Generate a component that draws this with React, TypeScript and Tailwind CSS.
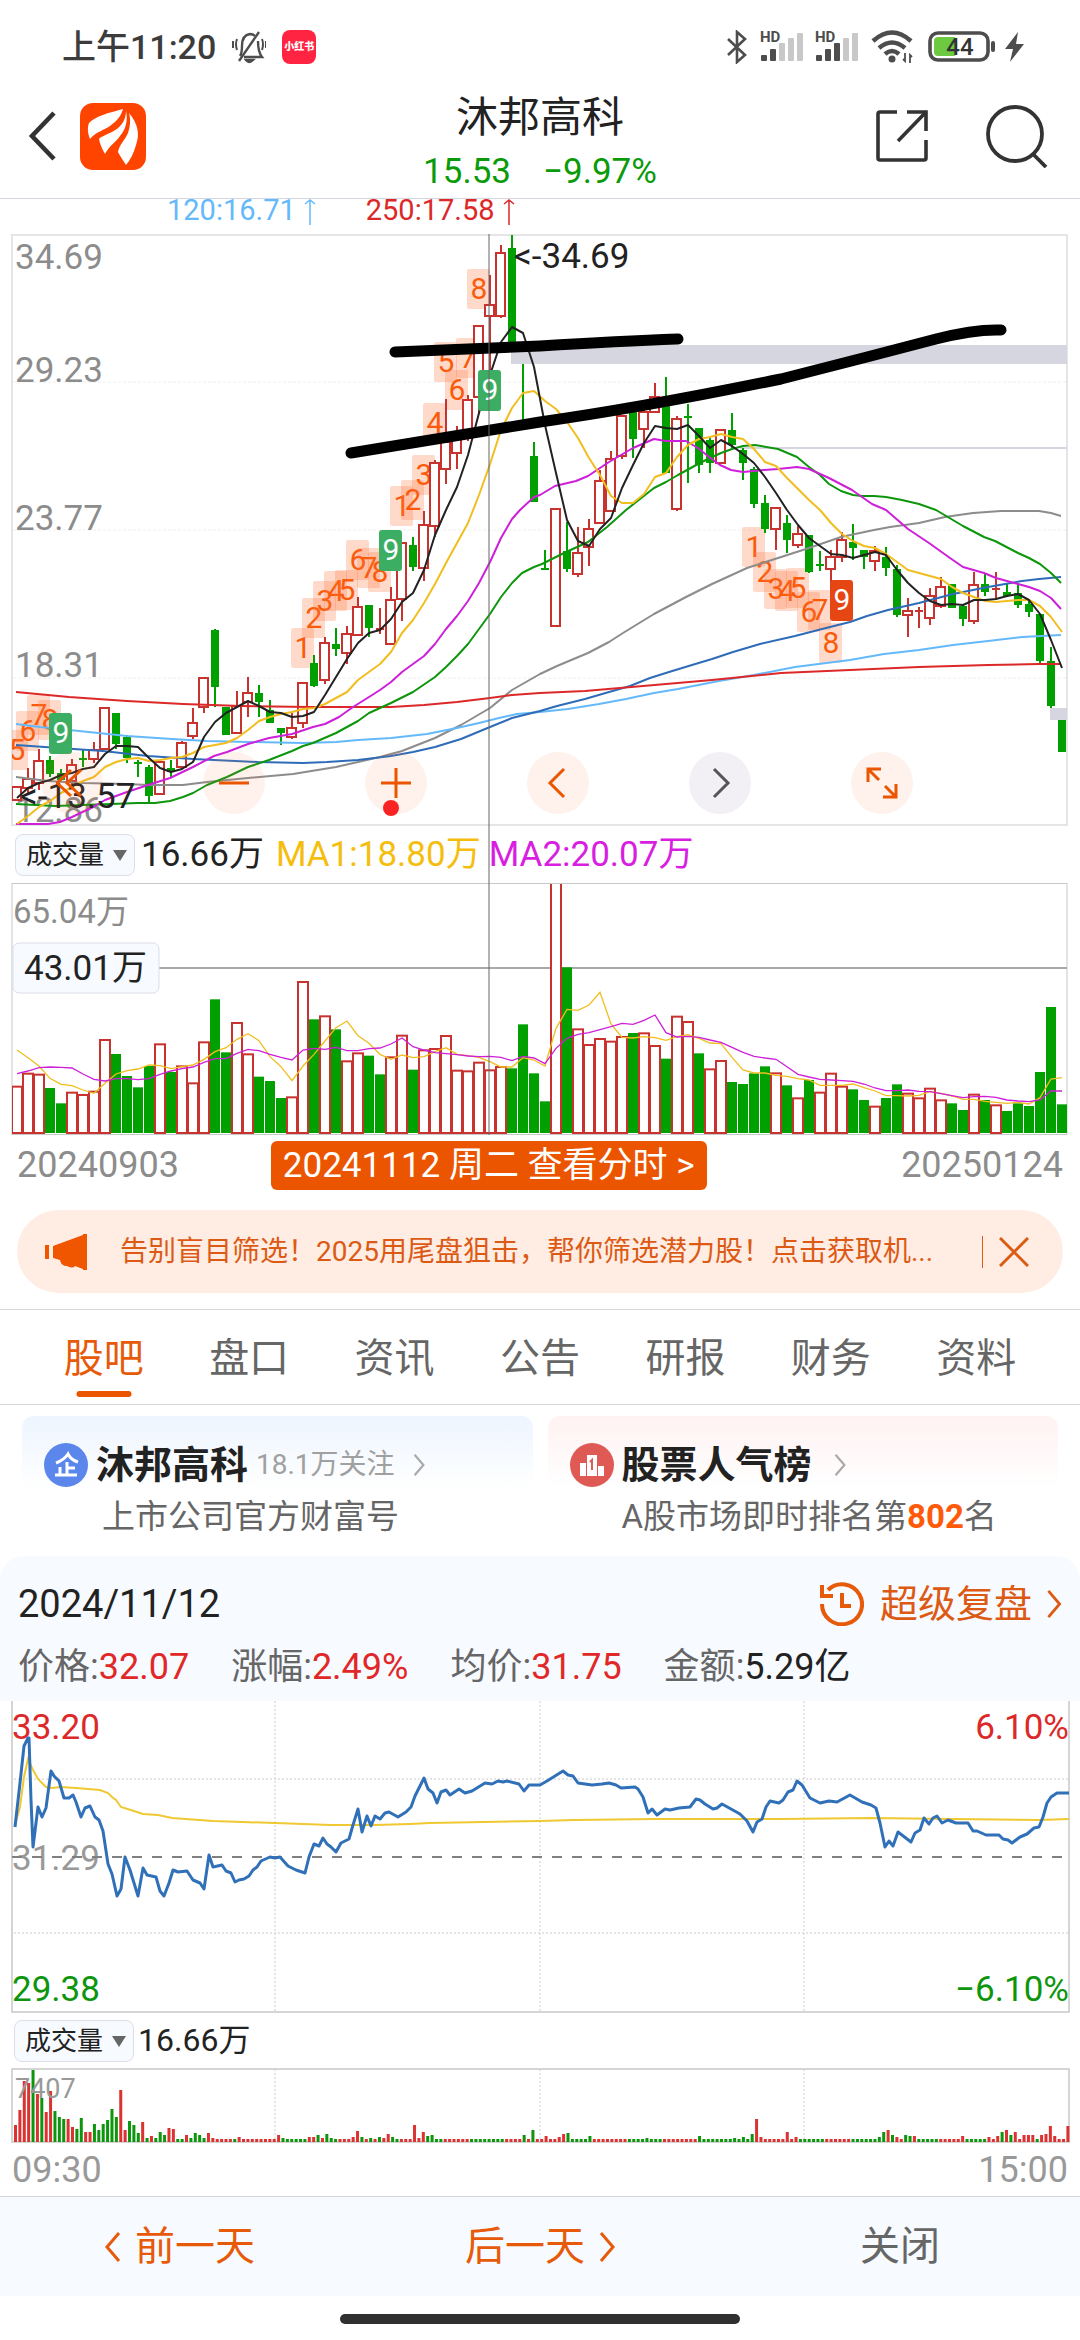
import { useState } from "react"
import type { ReactNode } from "react"

type Candle = [number, number, number, number, number] // high, body top, body bottom, low, 1 = up
type Point = [number, number]

const RED = "#c8322f"
const GREEN = "#00a000"
const STEP = 11
const FIRST_X = 17

const barX = (i: number) => FIRST_X + i * STEP

const candles: Candle[] = [
  [553, 553, 566, 566, 1], [534, 545, 554, 559, 1], [515, 527, 549, 556, 1], [522, 526, 540, 543, 0],
  [535, 539, 546, 548, 0], [525, 531, 547, 551, 1], [516, 524, 526, 533, 0], [508, 516, 525, 529, 1],
  [474, 474, 515, 515, 1], [479, 479, 510, 515, 0], [501, 503, 524, 529, 0], [526, 528, 529, 543, 0],
  [531, 533, 562, 568, 0], [528, 528, 560, 560, 1], [526, 534, 538, 543, 0], [507, 509, 533, 535, 1],
  [474, 489, 502, 505, 1], [444, 444, 473, 479, 1], [395, 396, 453, 473, 0], [473, 473, 501, 501, 0],
  [457, 472, 499, 500, 1], [443, 459, 468, 483, 1], [451, 459, 468, 483, 0], [466, 476, 489, 489, 0],
  [494, 494, 499, 511, 0], [479, 494, 503, 505, 1], [449, 449, 489, 494, 1], [421, 429, 452, 453, 0],
  [403, 409, 446, 450, 1], [394, 410, 415, 422, 0], [392, 400, 419, 430, 1], [363, 373, 401, 402, 1],
  [371, 371, 394, 403, 0], [374, 394, 395, 400, 1], [353, 366, 410, 411, 1], [309, 309, 365, 387, 1],
  [303, 311, 333, 337, 0], [277, 291, 334, 347, 1], [226, 229, 292, 303, 1], [165, 208, 235, 250, 1],
  [192, 204, 219, 235, 1], [161, 166, 203, 207, 1], [92, 92, 163, 180, 1], [41, 71, 82, 156, 1],
  [11, 19, 82, 84, 1], [1, 14, 108, 108, 0], [130, 186, 187, 187, 0], [208, 222, 268, 268, 0],
  [316, 334, 336, 336, 0], [275, 275, 392, 392, 1], [288, 317, 335, 338, 0], [293, 319, 340, 343, 1],
  [285, 295, 313, 332, 1], [236, 247, 289, 289, 1], [217, 225, 277, 278, 1], [182, 182, 222, 225, 1],
  [178, 178, 205, 224, 0], [176, 178, 195, 214, 1], [149, 163, 178, 178, 1], [143, 164, 239, 239, 0],
  [182, 185, 275, 277, 1], [170, 182, 184, 249, 0], [194, 194, 231, 239, 0], [204, 206, 229, 239, 0],
  [196, 196, 229, 229, 1], [179, 196, 211, 214, 0], [214, 216, 229, 246, 0], [233, 235, 270, 274, 0],
  [261, 269, 295, 299, 0], [274, 274, 295, 316, 1], [281, 289, 306, 319, 0], [292, 300, 311, 314, 1],
  [301, 301, 338, 339, 0], [317, 330, 331, 337, 0], [316, 323, 335, 353, 1], [298, 306, 323, 328, 1],
  [290, 308, 314, 326, 0], [316, 316, 323, 335, 0], [312, 317, 327, 337, 1], [313, 323, 334, 342, 0],
  [331, 335, 381, 383, 0], [364, 377, 381, 403, 1], [373, 376, 377, 394, 1], [354, 362, 384, 391, 1],
  [343, 353, 372, 374, 1], [350, 350, 374, 374, 0], [370, 372, 385, 392, 0], [338, 351, 387, 390, 1],
  [339, 350, 358, 362, 0], [338, 354, 356, 365, 1], [349, 358, 362, 363, 0], [349, 359, 371, 374, 0],
  [365, 370, 378, 383, 0], [380, 380, 427, 429, 0], [413, 427, 472, 474, 0], [486, 486, 518, 518, 0],
]

const ma5 = [
  564, 554, 549, 546, 541, 539, 535, 533, 520, 512, 512, 513, 524, 534, 538, 535, 528, 503, 488, 479, 473, 467, 472, 478,
  479, 483, 482, 478, 461, 443, 425, 409, 399, 396, 385, 368, 359, 336, 301, 276, 253, 221, 179, 141, 108, 93, 99, 133,
  191, 239, 286, 307, 312, 295, 284, 254, 231, 209, 192, 194, 195, 191, 202, 214, 206, 212, 220, 229, 243, 259, 276, 291,
  304, 312, 320, 321, 324, 321, 318, 321, 336, 349, 359, 367, 371, 370, 371, 366, 366, 365, 362, 360, 366, 380, 406, 434,
]

const ma10 = [
  590, 582, 573, 567, 559, 553, 547, 543, 533, 528, 525, 524, 527, 526, 524, 523, 519, 513, 511, 509, 504, 496, 487, 483,
  480, 478, 475, 474, 470, 464, 458, 446, 438, 430, 418, 399, 386, 369, 350, 329, 309, 289, 261, 230, 196, 174, 159, 157,
  167, 175, 188, 204, 224, 241, 262, 269, 269, 260, 243, 239, 223, 211, 205, 203, 200, 203, 205, 215, 228, 232, 244, 255,
  266, 276, 289, 300, 307, 312, 314, 320, 328, 336, 339, 342, 345, 353, 359, 363, 367, 368, 367, 366, 366, 372, 383, 398,
]

const ma20: Point[] = [
  [16, 590], [48, 590], [60, 588], [72, 583], [93, 573], [105, 566], [127, 558], [148, 551], [170, 544], [193, 533],
  [214, 522], [227, 518], [248, 510], [269, 504], [292, 500], [313, 493], [325, 490], [339, 483], [353, 473], [369, 463],
  [380, 456], [391, 448], [402, 438], [424, 422], [435, 410], [446, 395], [457, 382], [468, 367], [479, 349], [490, 328],
  [501, 304], [512, 285], [520, 276], [534, 263], [540, 261], [555, 252], [576, 247], [588, 242], [609, 228], [633, 214],
  [654, 205], [666, 207], [686, 207], [698, 214], [709, 223], [720, 231], [731, 236], [743, 238], [764, 236], [778, 235],
  [797, 233], [809, 235], [829, 244], [852, 256], [872, 270], [886, 276], [908, 295], [929, 309], [950, 324], [963, 333],
  [984, 339], [996, 344], [1018, 350], [1029, 353], [1040, 357], [1051, 364], [1061, 375],
]

const ma30: Point[] = [
  [16, 570], [55, 572], [83, 571], [138, 569], [155, 569], [170, 567], [183, 563], [193, 559], [207, 551], [227, 543],
  [248, 533], [269, 526], [292, 517], [303, 512], [313, 509], [336, 499], [358, 487], [369, 479], [391, 469], [413, 458],
  [435, 443], [446, 433], [457, 422], [468, 410], [479, 395], [490, 380], [501, 363], [512, 349], [522, 339], [534, 333],
  [542, 330], [564, 319], [588, 308], [607, 293], [626, 276], [654, 254], [666, 248], [678, 241], [698, 230], [710, 224],
  [721, 219], [732, 215], [743, 212], [755, 211], [778, 215], [797, 223], [809, 233], [820, 241], [829, 250], [841, 257],
  [853, 261], [862, 262], [874, 262], [886, 263], [902, 266], [919, 270], [936, 276], [963, 292], [984, 303], [995, 307],
  [1018, 319], [1029, 324], [1040, 330], [1051, 339], [1061, 349],
]

const ma60: Point[] = [
  [16, 543], [48, 547], [83, 549], [127, 550], [148, 551], [183, 551], [207, 548], [248, 544], [293, 540], [336, 533],
  [380, 523], [402, 517], [435, 504], [461, 491], [490, 474], [512, 456], [540, 440], [557, 432], [588, 419], [609, 408],
  [623, 399], [654, 380], [686, 363], [712, 350], [747, 334], [778, 324], [809, 314], [841, 303], [874, 296], [890, 293],
  [919, 289], [945, 283], [973, 279], [1001, 277], [1039, 277], [1051, 279], [1061, 282],
]

const ma120: Point[] = [
  [16, 490], [40, 493], [79, 497], [127, 502], [172, 505], [207, 507], [248, 508], [303, 509], [336, 508], [358, 506],
  [391, 504], [427, 500], [457, 494], [479, 489], [499, 484], [517, 480], [540, 478], [568, 475], [599, 470], [626, 465],
  [654, 459], [678, 455], [719, 447], [754, 441], [795, 433], [850, 426], [884, 420], [919, 416], [953, 411], [988, 407],
  [1022, 403], [1061, 401],
]

const ma144: Point[] = [
  [16, 511], [59, 514], [103, 517], [148, 522], [193, 525], [258, 528], [303, 529], [327, 528], [358, 526], [391, 522],
  [413, 518], [435, 513], [461, 505], [490, 493], [512, 484], [540, 477], [557, 472], [585, 465], [609, 458], [630, 452],
  [650, 444], [669, 438], [692, 431], [712, 425], [733, 418], [760, 410], [795, 402], [826, 394], [850, 388], [867, 382],
  [888, 376], [919, 369], [953, 360], [988, 353], [1022, 347], [1039, 345], [1061, 343],
]

const ma250: Point[] = [
  [16, 458], [69, 463], [127, 467], [183, 470], [241, 472], [310, 473], [391, 473], [424, 471], [457, 468], [490, 464],
  [512, 461], [540, 459], [585, 457], [643, 452], [712, 446], [781, 439], [850, 436], [919, 433], [988, 431], [1039, 430],
  [1061, 430],
]

// bar index, centre y, count
const counts: [number, number, number][] = [
  [0, 516, 5], [1, 497, 6], [2, 481, 7], [3, 486, 8],
  [26, 414, 1], [27, 384, 2], [28, 367, 3], [29, 357, 4], [30, 356, 5], [31, 326, 6], [32, 334, 7], [33, 338, 8],
  [35, 272, 1], [36, 266, 2], [37, 241, 3], [38, 189, 4], [39, 128, 5], [40, 156, 6], [41, 124, 7], [42, 55, 8],
  [67, 313, 1], [68, 338, 2], [69, 355, 3], [70, 357, 4], [71, 354, 5], [72, 378, 6], [73, 376, 7], [74, 409, 8],
]

const nines = [
  { i: 4, y: 499, fill: "#3cae64" },
  { i: 34, y: 316, fill: "#3cae64" },
  { i: 43, y: 156, fill: "#3cae64" },
  { i: 75, y: 366, fill: "#e64614" },
]

const priceLabels: [string, number][] = [
  ["34.69", 35], ["29.23", 148], ["23.77", 296], ["18.31", 443], ["12.86", 588],
]

// bar tops, three units to one chart unit
const volumes = [
  797, 758, 761, 804, 850, 815, 822, 812, 657, 702, 768, 802, 738, 670, 756, 736, 787, 664, 538, 697, 606, 700, 770, 783,
  834, 829, 483, 598, 586, 628, 721, 697, 707, 763, 709, 644, 749, 688, 684, 645, 749, 751, 725, 748, 738, 745, 613, 760,
  844, 180, 442, 625, 672, 654, 662, 648, 639, 637, 675, 716, 587, 603, 700, 745, 720, 786, 792, 760, 739, 757, 796, 832,
  780, 815, 758, 797, 808, 840, 857, 834, 793, 818, 832, 803, 838, 850, 870, 821, 840, 853, 873, 850, 858, 756, 561, 853,
]
const volumeColors =
  "rrrggrrrrggggrgrrrggrrgggrrgrgrrggrrgrrrrrrrrggggrgrrrrrgrrgrrgrrggggrgrgrrrggrggrrrrggrgrgggggg"

const volumeMa5 = [
  690, 713, 738, 775, 793, 797, 810, 820, 790, 762, 752, 747, 735, 737, 746, 740, 735, 718, 695, 683, 658, 641, 662, 710,
  740, 782, 738, 703, 663, 623, 603, 647, 670, 703, 718, 705, 713, 710, 695, 683, 703, 707, 712, 725, 741, 741, 713, 720,
  738, 625, 568, 571, 555, 517, 612, 652, 654, 650, 653, 661, 650, 644, 655, 669, 671, 712, 750, 759, 759, 766, 769, 776,
  780, 796, 796, 796, 792, 803, 813, 827, 827, 828, 826, 815, 820, 828, 838, 838, 844, 847, 850, 847, 852, 833, 777, 773,
]
const volumeMa10 = [
  761, 753, 743, 741, 742, 744, 762, 778, 783, 776, 776, 779, 776, 763, 753, 746, 741, 727, 716, 716, 700, 688, 692, 703,
  712, 720, 690, 685, 688, 682, 692, 692, 686, 684, 672, 654, 680, 690, 698, 701, 704, 708, 710, 709, 712, 722, 709, 714,
  731, 685, 655, 643, 638, 629, 620, 610, 613, 601, 585, 638, 651, 649, 652, 660, 667, 682, 697, 709, 714, 718, 740, 763,
  771, 778, 780, 782, 784, 792, 804, 812, 812, 810, 814, 815, 821, 827, 833, 830, 829, 832, 840, 843, 845, 840, 813, 813,
]

const dayPrice: Point[] = [
  [15, 126], [20, 82], [24, 45], [28, 37], [29, 37], [31, 99], [33, 146], [38, 106], [42, 116], [46, 107], [51, 70],
  [54, 75], [59, 80], [64, 97], [69, 97], [73, 94], [76, 101], [81, 116], [85, 107], [90, 105], [95, 116], [99, 119],
  [103, 130], [108, 163], [112, 173], [117, 195], [121, 188], [125, 156], [130, 169], [138, 195], [143, 167], [147, 174],
  [156, 176], [160, 190], [164, 195], [169, 182], [173, 169], [178, 171], [187, 170], [193, 179], [200, 182], [204, 188],
  [209, 154], [213, 166], [222, 164], [226, 170], [231, 172], [235, 181], [239, 179], [244, 178], [249, 175], [253, 169],
  [257, 166], [261, 160], [270, 156], [275, 157], [280, 156], [288, 165], [296, 169], [305, 172], [309, 156], [314, 143],
  [319, 145], [323, 137], [327, 143], [331, 146], [336, 151], [341, 142], [349, 138], [353, 124], [358, 108], [362, 131],
  [367, 115], [371, 125], [375, 115], [380, 118], [385, 112], [389, 111], [398, 116], [406, 111], [411, 106], [415, 95],
  [419, 87], [424, 77], [428, 88], [433, 92], [437, 102], [441, 91], [446, 89], [450, 94], [459, 88], [465, 92],
  [472, 90], [485, 82], [492, 83], [498, 80], [503, 81], [507, 80], [519, 83], [524, 90], [529, 84], [540, 84],
  [547, 80], [555, 75], [563, 70], [568, 74], [573, 75], [578, 82], [592, 84], [602, 83], [609, 82], [616, 84],
  [621, 87], [635, 86], [638, 88], [643, 96], [648, 112], [652, 108], [657, 114], [665, 108], [670, 109], [679, 107],
  [690, 106], [696, 98], [700, 99], [705, 103], [713, 108], [717, 107], [722, 103], [731, 108], [740, 113], [747, 120],
  [753, 131], [757, 121], [762, 118], [766, 106], [770, 100], [779, 102], [783, 99], [788, 91], [793, 89], [797, 80],
  [802, 84], [810, 97], [820, 102], [829, 100], [837, 101], [850, 94], [862, 101], [871, 104], [876, 107], [880, 122],
  [885, 146], [889, 140], [893, 145], [898, 131], [911, 141], [915, 132], [920, 129], [924, 117], [929, 123], [933, 117],
  [937, 115], [942, 122], [948, 119], [956, 122], [968, 122], [973, 130], [977, 130], [986, 134], [999, 134], [1003, 138],
  [1008, 139], [1012, 142], [1020, 136], [1027, 133], [1034, 127], [1039, 126], [1043, 116], [1047, 102], [1051, 96],
  [1057, 92], [1069, 92],
]

const dayAverage: Point[] = [
  [15, 124], [20, 106], [24, 76], [28, 58], [33, 69], [38, 78], [46, 86], [52, 87], [60, 86], [76, 87], [100, 89],
  [108, 92], [112, 96], [116, 99], [121, 106], [134, 110], [143, 113], [158, 114], [172, 117], [213, 120], [275, 122],
  [331, 124], [375, 124], [410, 123], [430, 122], [540, 120], [574, 119], [654, 118], [781, 118], [871, 117], [953, 118],
  [1039, 119], [1069, 118],
]

// minutes that stand out from the quiet level: height, colour
const dayVolumes: Record<number, [number, string]> = {
  0: [17, "r"], 1: [32, "r"], 2: [61, "r"], 3: [59, "r"], 4: [72, "g"], 5: [48, "r"], 6: [44, "g"], 7: [30, "r"],
  8: [51, "r"], 9: [31, "g"], 10: [25, "g"], 11: [23, "g"], 12: [23, "r"], 13: [15, "r"], 14: [13, "g"], 15: [24, "g"],
  16: [10, "r"], 17: [10, "r"], 18: [18, "g"], 19: [12, "g"], 20: [18, "g"], 21: [22, "g"], 22: [33, "g"], 23: [25, "g"],
  24: [52, "r"], 25: [12, "r"], 26: [21, "g"], 27: [17, "g"], 28: [9, "g"], 29: [20, "r"], 30: [4, "g"], 31: [6, "r"],
  32: [4, "g"], 33: [10, "g"], 34: [7, "g"], 35: [14, "r"], 36: [13, "r"], 39: [7, "r"], 40: [4, "g"], 41: [9, "g"],
  42: [7, "g"], 43: [4, "g"], 44: [9, "r"], 45: [4, "r"], 51: [5, "r"], 60: [7, "r"], 61: [4, "g"], 67: [5, "r"],
  68: [5, "r"], 69: [7, "g"], 70: [4, "r"], 71: [8, "g"], 72: [4, "g"], 77: [5, "r"], 78: [11, "r"], 79: [5, "g"],
  81: [4, "g"], 83: [5, "g"], 84: [4, "r"], 85: [8, "r"], 86: [5, "g"], 91: [17, "r"], 92: [4, "r"], 93: [10, "r"],
  94: [6, "g"], 95: [7, "g"], 116: [7, "g"], 118: [12, "g"], 121: [6, "r"], 124: [5, "r"], 125: [8, "r"], 126: [9, "g"],
  131: [6, "g"], 144: [4, "g"], 156: [6, "g"], 164: [4, "g"], 166: [5, "g"], 168: [8, "g"], 169: [23, "r"], 170: [5, "r"],
  176: [10, "r"], 178: [5, "r"], 197: [5, "g"], 198: [10, "g"], 199: [12, "r"], 200: [7, "g"], 201: [5, "r"],
  203: [7, "g"], 204: [6, "g"], 205: [6, "r"], 216: [6, "r"], 222: [5, "r"], 224: [6, "r"], 225: [10, "g"],
  226: [12, "r"], 227: [7, "g"], 228: [10, "r"], 230: [7, "r"], 231: [7, "r"], 232: [7, "r"], 234: [7, "r"],
  235: [8, "r"], 236: [16, "r"], 237: [6, "r"], 240: [16, "r"],
}
const quietGreen = [[37, 38], [50, 50], [62, 66], [73, 73], [87, 87], [96, 97], [104, 111], [127, 130], [140, 147], [157, 168], [179, 184], [191, 197], [206, 210], [217, 221], [233, 233]]

const tabs = ["股吧", "盘口", "资讯", "公告", "研报", "财务", "资料"]

const toPoints = (list: Point[]) => list.map((p) => p.join(",")).join(" ")
const barPoints = (list: number[]) => list.map((y, i) => `${barX(i)},${y}`).join(" ")
const volumeY = (v: number) => v / 3 - 63
const volumePoints = (list: number[]) => list.map((v, i) => `${barX(i)},${volumeY(v)}`).join(" ")

function Chevron({ left, className }: { left?: boolean; className: string }) {
  return (
    <svg viewBox="0 0 16 30" fill="none" stroke="currentColor" strokeWidth="3" className={className}>
      <path d={left ? "M14 1 L2 15 L14 29" : "M2 1 L14 15 L2 29"} />
    </svg>
  )
}

function Signal({ strong }: { strong: number }) {
  return (
    <svg viewBox="0 0 43 34" className="h-[34px] w-[43px] overflow-visible">
      <text x="0" y="12" fontSize="15" fontWeight="700" fill="#4d4d4d">HD</text>
      {[6, 12, 18, 23, 28].map((h, i) => (
        <rect key={i} x={1 + i * 9} y={31 - h} width="6" height={h} rx="1" fill={i < strong ? "#4d4d4d" : "#c8c8c8"} />
      ))}
    </svg>
  )
}

function StatusBar() {
  return (
    <div className="flex h-[94px] items-center justify-between pl-[62px] pr-[54px] text-[#3c3c3c]">
      <div className="flex items-center gap-4">
        <span className="text-[34px] leading-[40px] font-medium">上午11:20</span>
        <svg viewBox="0 0 34 34" fill="none" stroke="#4d4d4d" strokeWidth="2.4" className="h-[34px] w-[34px]">
          <path d="M8 26 Q10 23 10 16 Q10 5 18 4 Q21 4 23 6" />
          <path d="M26 11 Q26 22 30 27 H12" />
          <path d="M27 2 L7 31" />
          <path d="M5 9 Q3 14 5 20 M1 11 V18 M30 9 Q32 14 30 20 M34 11 V18" strokeWidth="2" />
          <path d="M14 30 Q17 34 21 30 Z" fill="#4d4d4d" />
        </svg>
        <span className="flex h-[34px] w-[34px] items-center justify-center rounded-lg bg-[#ff2442] text-[10px] leading-none font-black text-white">
          小红书
        </span>
      </div>
      <div className="flex items-center gap-3">
        <svg viewBox="0 0 22 34" fill="none" stroke="#4d4d4d" strokeWidth="2.6" className="h-[34px] w-[22px]">
          <path d="M2 9 L19 25 L11 32 V2 L19 9 L2 25" />
        </svg>
        <Signal strong={2} />
        <Signal strong={3} />
        <svg viewBox="0 0 46 34" fill="none" stroke="#4d4d4d" strokeWidth="4.5" className="h-[34px] w-[46px]">
          <path d="M3 11 Q22 -6 41 11" />
          <path d="M9 18 Q22 7 35 18" />
          <path d="M15 24 Q22 18 29 24" />
          <circle cx="22" cy="29" r="3.5" fill="#4d4d4d" stroke="none" />
          <path d="M35 23 V31 L33 29 M40 33 V25 L42 27" strokeWidth="1.8" />
        </svg>
        <svg viewBox="0 0 98 34" className="h-[34px] w-[98px]">
          <rect x="2" y="3" width="58" height="27" rx="8" fill="none" stroke="#4d4d4d" strokeWidth="3.6" />
          <rect x="6" y="7" width="23" height="19" rx="4" fill="#6cc940" />
          <rect x="63" y="11" width="4" height="11" rx="2" fill="#4d4d4d" />
          <text x="32" y="25" fontSize="24" fontWeight="500" textAnchor="middle" fill="#333">44</text>
          <path d="M90 2 L77 19 H85 L82 32 L96 14 H88 Z" fill="#4d4d4d" />
        </svg>
      </div>
    </div>
  )
}

function Header() {
  return (
    <header className="grid grid-cols-[1fr_auto_1fr] items-center border-b border-[#d5d6df] pb-1">
      <div className="flex items-center gap-6 pb-4 pl-7">
        <button type="button" aria-label="返回">
          <svg viewBox="0 0 28 50" fill="none" stroke="#333" strokeWidth="4.6" className="h-[50px] w-7">
            <path d="M26 2 L4 25 L26 48" />
          </svg>
        </button>
        <svg viewBox="0 0 66 67" className="h-[67px] w-[66px]">
          <rect width="66" height="67" rx="13" fill="#ff4400" />
          <g fill="#fff">
            <path d="M43 6 C28 10 16 13 9 20 C7 25 8 31 10 36 C16 29 24 27 30 23 C37 18 41 13 43 6 Z" />
            <path d="M46 8 C46 18 40 25 32 29 C26 32 20 34 19 36 C20 41 22 46 25 51 C29 43 36 39 40 33 C46 26 48 17 46 8 Z" />
            <path d="M49 10 C58 21 60 31 56 42 C54 50 50 57 46 62 C43 57 40 53 38 49 C39 42 45 37 48 30 C50 24 51 17 49 10 Z" />
          </g>
        </svg>
      </div>
      <div className="text-center">
        <h1 className="text-[42px] leading-[48px] text-[#222]">沐邦高科</h1>
        <p className="mt-2 flex justify-center gap-8 text-[35px] leading-[44px] text-[#0a9a0a]">
          <span>15.53</span>
          <span>−9.97%</span>
        </p>
      </div>
      <div className="flex items-center justify-end gap-[56px] pr-[31px] pb-4">
        <button type="button" aria-label="分享">
          <svg viewBox="0 0 54 54" fill="none" stroke="#333" strokeWidth="3.6" className="h-[54px] w-[54px]">
            <path d="M22 3 H5 Q3 3 3 5 V49 Q3 51 5 51 H49 Q51 51 51 49 V31" />
            <path d="M32 3 H51 V22" />
            <path d="M51 3 L23 32" />
          </svg>
        </button>
        <button type="button" aria-label="搜索">
          <svg viewBox="0 0 64 64" fill="none" stroke="#333" strokeWidth="3.8" className="h-16 w-16">
            <circle cx="30" cy="30" r="27" />
            <path d="M48 50 L61 63" />
          </svg>
        </button>
      </div>
    </header>
  )
}

function UpArrow() {
  return (
    <svg viewBox="0 0 12 26" fill="none" stroke="currentColor" strokeWidth="1.5" className="h-[26px] w-3">
      <path d="M6 26 V1 M1 5 L6 1 L11 5" />
    </svg>
  )
}

function MaLegend() {
  return (
    <div className="flex h-[35px] gap-[50px] pl-[167px] text-[29px] leading-[23px]">
      <span className="flex gap-2 text-[#64b9fa]">120:16.71 <UpArrow /></span>
      <span className="flex gap-2 text-[#dc2828]">250:17.58 <UpArrow /></span>
    </div>
  )
}

function CandleChart() {
  return (
    <svg viewBox="0 0 1080 592" className="block w-full overflow-visible">
      <rect x="12" y="1" width="1055" height="590" fill="none" stroke="#e5e5e5" strokeWidth="2" />
      {[148, 296, 444].map((y) => (
        <line key={y} x1="13" x2="1067" y1={y} y2={y} stroke="#f0eef0" strokeDasharray="3 2" />
      ))}
      <rect x="511" y="111" width="556" height="19" fill="#d5d6df" />
      <line x1="740" x2="1067" y1="214" y2="214" stroke="#d5d6df" strokeWidth="2" />
      <rect x="1050" y="474" width="17" height="12" fill="#d5d6df" />

      <g fontSize="35" fill="#8c8c8c">
        {priceLabels.map(([label, y]) => (
          <text key={label} x="15" y={y}>{label}</text>
        ))}
      </g>

      {/* 九转计数 */}
      <svg x="12" y="0" width="1055" height="592" viewBox="12 0 1055 592">
        {counts.map(([i, y, n]) => (
          <g key={i}>
            <rect x={barX(i) - 12} y={y - 20} width="23" height="40" rx="2" fill="#ff7840" fillOpacity="0.27" />
            <text x={barX(i)} y={y + 10} fontSize="30" textAnchor="middle" fill="#fa5a0a">{n}</text>
          </g>
        ))}
        {candles.map(([high, top, bottom, low, up], i) => {
          const x = barX(i)
          const color = up ? RED : GREEN
          const height = Math.max(bottom - top, 2)
          return (
            <g key={i} stroke={color} strokeWidth="2">
              <line x1={x} x2={x} y1={high} y2={top} />
              <line x1={x} x2={x} y1={bottom} y2={low} />
              {up && height > 3 ? (
                <rect x={x - 5} y={top} width="9" height={height} fill="#fff" />
              ) : (
                <rect x={x - 4} y={top} width="8" height={height} fill={color} stroke="none" />
              )}
            </g>
          )
        })}
      </svg>

      <g fill="none" strokeWidth="2" strokeLinejoin="round">
        <polyline points={toPoints(ma60)} stroke="#8c8c8c" />
        <polyline points={toPoints(ma120)} stroke="#64b9fa" />
        <polyline points={toPoints(ma144)} stroke="#2f6cb8" />
        <polyline points={toPoints(ma250)} stroke="#dc2828" />
        <polyline points={toPoints(ma30)} stroke="#0d960d" />
        <polyline points={toPoints(ma20)} stroke="#cd20d8" />
        <polyline points={barPoints(ma10)} stroke="#f0be1e" />
        <polyline points={barPoints(ma5)} stroke="#222" />
      </g>

      {nines.map(({ i, y, fill }) => (
        <g key={i}>
          <rect x={barX(i) - 12} y={y - 20} width="23" height="41" rx="3" fill={fill} />
          <text x={barX(i)} y={y + 10} fontSize="30" textAnchor="middle" fill="#fff">9</text>
        </g>
      ))}

      <g fontSize="35" fill="#222">
        <text x="514" y="34">&lt;-34.69</text>
        <text x="20" y="574">&lt;-13.57</text>
      </g>

      <g fill="none" stroke="#000" strokeWidth="11" strokeLinecap="round" strokeLinejoin="round">
        <path d="M395 118 L540 112 Q620 107 678 105" />
        <path d="M351 219 L540 188 Q640 174 781 145 L867 123 L936 105 Q975 95 1001 96" />
      </g>
    </svg>
  )
}

function ToolButton({ label, muted, children }: { label: string; muted?: boolean; children: ReactNode }) {
  return (
    <button
      type="button"
      aria-label={label}
      className={`flex h-[62px] w-[62px] items-center justify-center rounded-full ${
        muted ? "bg-[#8c6ea0]/10 text-[#555]" : "bg-[#ff7846]/10 text-[#eb5500]"
      }`}
    >
      <svg viewBox="0 0 32 32" fill="none" stroke="currentColor" strokeWidth="3" className="h-8 w-8">
        {children}
      </svg>
    </button>
  )
}

function ChartTools() {
  return (
    <div className="absolute bottom-3 left-0 flex gap-[100px] pl-[41px]">
      <ToolButton label="向前翻页"><path d="M15 3 L1 16 L15 29 M25 3 L11 16 L25 29" /></ToolButton>
      <ToolButton label="缩小"><path d="M1 16 H31" /></ToolButton>
      <ToolButton label="放大"><path d="M1 16 H31 M16 1 V31" /></ToolButton>
      <ToolButton label="左移"><path d="M22 2 L8 16 L22 30" /></ToolButton>
      <ToolButton label="右移" muted><path d="M10 2 L24 16 L10 30" /></ToolButton>
      <ToolButton label="全屏"><path d="M15 2 H2 V15 M2 2 L13 13 M17 30 H30 V17 M30 30 L19 19" /></ToolButton>
    </div>
  )
}

function IndicatorSelect({ id }: { id: string }) {
  return (
    <div className="relative">
      <label htmlFor={id} className="sr-only">指标</label>
      <select
        id={id}
        className="block h-[42px] w-[120px] appearance-none rounded-lg border border-[#dcdee8] bg-[#f7faff] pl-[10px] text-[26px] leading-[38px] text-[#222]"
      >
        <option>成交量</option>
      </select>
      <svg viewBox="0 0 14 11" className="pointer-events-none absolute top-4 right-2 h-[11px] w-[14px] fill-[#666]">
        <path d="M0 0 H14 L7 11 Z" />
      </svg>
    </div>
  )
}

function VolumeChart() {
  return (
    <svg viewBox="0 0 1080 252" className="block w-full">
      <rect x="12" y="0.5" width="1055" height="251" fill="none" stroke="#c8c8c8" />
      <text x="13" y="40" fontSize="33" fill="#8c8c8c">65.04万</text>
      <line x1="159" x2="1067" y1="85" y2="85" stroke="#aaa" strokeWidth="2" />
      <svg x="12" y="1" width="1055" height="250" viewBox="12 1 1055 250">
        {volumes.map((v, i) => {
          const y = volumeY(v)
          return volumeColors[i] === "r" ? (
            <rect key={i} x={barX(i) - 5} y={y + 1} width="10" height={249 - y} fill="#fff" stroke={RED} strokeWidth="2" />
          ) : (
            <rect key={i} x={barX(i) - 5} y={y} width="10" height={250 - y} fill={GREEN} />
          )
        })}
      </svg>
      <polyline points={volumePoints(volumeMa5)} fill="none" stroke="#f0be1e" strokeWidth="1.3" />
      <polyline points={volumePoints(volumeMa10)} fill="none" stroke="#cd20d8" strokeWidth="1.3" />
      <rect x="13" y="60" width="146" height="50" rx="6" fill="#f7faff" stroke="#dcdee8" />
      <text x="24" y="97" fontSize="35" fill="#222">43.01万</text>
    </svg>
  )
}

function DateRow() {
  return (
    <div className="flex items-center px-[17px] pt-[6px] text-[36px] leading-[49px] text-[#8c8c8c]">
      <span>20240903</span>
      <button type="button" className="ml-[92px] rounded-md bg-[#eb5500] px-3 text-[35px] text-white">
        20241112 周二 查看分时 &gt;
      </button>
      <span className="ml-auto">20250124</span>
    </div>
  )
}

function Banner() {
  return (
    <div className="mx-[17px] mt-5 mb-4 flex h-[83px] items-center rounded-full bg-[#ffede4] pr-[34px] pl-7 text-[#dc5a14]">
      <svg viewBox="0 0 42 36" className="h-9 w-[42px] shrink-0 fill-[#f05500]">
        <path d="M0 11 H4 V25 H0 Z M8 12 L38 1 V0 H42 V36 H38 V35 L30 32 Q28 35 22 32 Q16 32 15 26 L8 24 Z" />
      </svg>
      <a href="#ad" className="ml-[33px] flex-1 truncate text-[28px] leading-[44px]">
        告别盲目筛选！2025用尾盘狙击，帮你筛选潜力股！点击获取机...
      </a>
      <span className="mr-4 h-8 w-px bg-[#dc5a14]" />
      <button type="button" aria-label="关闭广告">
        <svg viewBox="0 0 30 30" fill="none" stroke="currentColor" strokeWidth="3" className="h-[30px] w-[30px]">
          <path d="M1 1 L29 29 M29 1 L1 29" />
        </svg>
      </button>
    </div>
  )
}

function Tabs() {
  const [active, setActive] = useState(tabs[0])

  return (
    <nav className="flex border-y border-[#d5d6dc] px-[31px]">
      {tabs.map((tab) => (
        <button
          key={tab}
          type="button"
          onClick={() => setActive(tab)}
          className={`relative h-[94px] flex-1 pt-1 text-[40px] ${tab === active ? "text-[#e65a0a]" : "text-[#666]"}`}
        >
          {tab}
          {tab === active && (
            <span className="absolute bottom-[7px] left-1/2 h-[6px] w-[55px] -translate-x-1/2 rounded-full bg-[#eb5500]" />
          )}
        </button>
      ))}
    </nav>
  )
}

function Cards() {
  return (
    <div className="flex gap-[15px] px-[22px] pt-[11px] pb-[19px] text-[33px] leading-[40px] text-[#666]">
      <a href="#company" className="block flex-1 rounded-xl bg-linear-to-b from-[#edf5ff] to-white to-60% pt-[25px]">
        <span className="flex items-center pl-[22px]">
          <svg viewBox="0 0 44 44" className="h-11 w-11">
            <circle cx="22" cy="22" r="22" fill="#5b86ec" />
            <path d="M12 20 Q20 17 24 11 Q27 17 34 19 M23 19 V32 M16 24 V32 M23 25 H31 M11 32 H33" fill="none" stroke="#fff" strokeWidth="3" />
          </svg>
          <span className="ml-2 text-[38px] leading-[48px] font-bold text-[#222]">沐邦高科</span>
          <span className="ml-2 text-[28px] text-[#a0a0a0]">18.1万关注</span>
          <Chevron className="ml-[18px] h-[22px] w-3 text-[#aaa]" />
        </span>
        <span className="mt-2 block pl-[80px]">上市公司官方财富号</span>
      </a>
      <a href="#rank" className="block flex-1 rounded-xl bg-linear-to-b from-[#fff2f2] to-white to-60% pt-[25px]">
        <span className="flex items-center pl-[22px]">
          <svg viewBox="0 0 44 44" className="h-11 w-11">
            <circle cx="22" cy="22" r="22" fill="#e05a55" />
            <path d="M10 20 H16 V33 H10 Z M17 12 H27 V33 H17 Z M28 23 H34 V33 H28 Z" fill="#fff" />
            <path d="M20 19 L22 17 V27" fill="none" stroke="#e05a55" strokeWidth="2" />
          </svg>
          <span className="ml-2 text-[38px] leading-[48px] font-bold text-[#222]">股票人气榜</span>
          <Chevron className="ml-[22px] h-[22px] w-3 text-[#aaa]" />
        </span>
        <span className="mt-2 block pl-[74px]">
          A股市场即时排名第<b className="text-[#ff5a0a]">802</b>名
        </span>
      </a>
    </div>
  )
}

function Stat({ label, value, className }: { label: string; value: string; className: string }) {
  return (
    <span>
      {label}:<span className={className}>{value}</span>
    </span>
  )
}

function DayHeader() {
  return (
    <div className="rounded-t-3xl bg-[#f7faff] px-[18px] pt-[5px] pb-[14px]">
      <div className="flex h-[86px] items-center justify-between leading-[50px]">
        <span className="text-[38px] text-[#222]">2024/11/12</span>
        <button type="button" className="flex items-center text-[38px] text-[#dc5a14]">
          <svg viewBox="0 0 44 44" fill="none" stroke="#e65a0a" strokeWidth="4" className="mr-4 h-11 w-11">
            <path d="M2 22 A20 20 0 1 0 8 8 M2 3 V14 H13" />
            <path d="M22 11 V24 H31" />
          </svg>
          超级复盘
          <Chevron className="ml-[14px] h-7 w-4" />
        </button>
      </div>
      <div className="flex gap-[42px] text-[36px] leading-[40px] text-[#666]">
        <Stat label="价格" value="32.07" className="text-[#e12828]" />
        <Stat label="涨幅" value="2.49%" className="text-[#e12828]" />
        <Stat label="均价" value="31.75" className="text-[#e12828]" />
        <Stat label="金额" value="5.29亿" className="text-[#222]" />
      </div>
    </div>
  )
}

function DayChart() {
  return (
    <svg viewBox="0 0 1080 312" className="block w-full">
      <path d="M12 0 V311 H1069 V0" fill="none" stroke="#c8c8c8" strokeWidth="1.5" />
      <path d="M14 78 H1069 M14 232 H1069 M275 0 V311 M540 0 V311 M804 0 V311" stroke="#ccc" strokeDasharray="2 2" />
      <g fontSize="35">
        <text x="12" y="38" fill="#dc2828">33.20</text>
        <text x="12" y="169" fill="#999">31.29</text>
        <text x="12" y="300" fill="#0d960d">29.38</text>
        <text x="1069" y="38" textAnchor="end" fill="#dc2828">6.10%</text>
        <text x="1069" y="300" textAnchor="end" fill="#0d960d">−6.10%</text>
      </g>
      <line x1="12" x2="1067" y1="156" y2="156" stroke="#808080" strokeWidth="2" strokeDasharray="10 10" />
      <polyline points={toPoints(dayAverage)} fill="none" stroke="#f0c832" strokeWidth="2" />
      <polyline points={toPoints(dayPrice)} fill="none" stroke="#3070b8" strokeWidth="3" strokeLinejoin="round" />
    </svg>
  )
}

function dayBar(i: number): [number, string] {
  if (dayVolumes[i]) return dayVolumes[i]
  return [3, quietGreen.some(([from, to]) => i >= from && i <= to) ? "g" : "r"]
}

function DayVolumeChart() {
  return (
    <svg viewBox="0 0 1080 75" className="block w-full">
      <rect x="12" y="1" width="1057" height="73" fill="none" stroke="#c8c8c8" strokeWidth="1.5" />
      <path d="M275 1 V74 M540 1 V74 M804 1 V74" stroke="#ccc" strokeDasharray="2 2" />
      {Array.from({ length: 241 }, (_, i) => {
        const [height, color] = dayBar(i)
        return (
          <rect key={i} x={14 + i * 4.385} y={74 - height} width="3" height={height} fill={color === "r" ? "#dc3232" : "#0d960d"} />
        )
      })}
      <text x="15" y="30" fontSize="27" fill="#999">7407</text>
    </svg>
  )
}

function BottomBar() {
  return (
    <div className="grid h-[100px] grid-cols-3 border-t border-[#d5d6dc] bg-[#f7faff] text-[40px] text-[#e65a0a]">
      <button type="button" className="flex items-center justify-center gap-[14px]">
        <Chevron left className="h-[30px] w-4" />
        前一天
      </button>
      <button type="button" className="flex items-center justify-center gap-[14px]">
        后一天
        <Chevron className="h-[30px] w-4" />
      </button>
      <button type="button" className="text-[#666]">关闭</button>
    </div>
  )
}

export default function App() {
  return (
    <div className="min-h-screen w-full bg-white font-['Roboto','Noto_Sans_CJK_SC',sans-serif]">
      <StatusBar />
      <Header />
      <MaLegend />

      {/* K线 + 成交量, 共用十字光标 */}
      <div className="relative">
        <div className="relative">
          <CandleChart />
          <ChartTools />
          <span className="absolute bottom-[10px] left-[383px] h-4 w-4 rounded-full bg-[#fa2323]" />
        </div>
        <div className="flex h-[57px] items-center pl-[15px] text-[35px] leading-[57px] whitespace-nowrap">
          <IndicatorSelect id="indicator" />
          <span className="ml-[6px] text-[#222]">16.66万</span>
          <span className="ml-3 text-[#f5be0f]">MA1:18.80万</span>
          <span className="ml-2 text-[#d71ee1]">MA2:20.07万</span>
        </div>
        <VolumeChart />
        <span className="pointer-events-none absolute inset-y-0 left-[45.2%] w-[2px] bg-[#666]/50" />
      </div>
      <DateRow />

      <Banner />
      <Tabs />
      <Cards />

      <DayHeader />
      <DayChart />
      <div className="flex h-[55px] items-center pl-[14px] text-[32px] leading-[55px]">
        <IndicatorSelect id="day-indicator" />
        <span className="ml-1 text-[#222]">16.66万</span>
      </div>
      <DayVolumeChart />
      <div className="flex h-[53px] items-center justify-between px-3 text-[36px] text-[#999]">
        <span>09:30</span>
        <span>15:00</span>
      </div>
      <BottomBar />
      <div className="mx-auto mt-[18px] h-[10px] w-[37%] rounded-full bg-[#303030]" />
    </div>
  )
}
